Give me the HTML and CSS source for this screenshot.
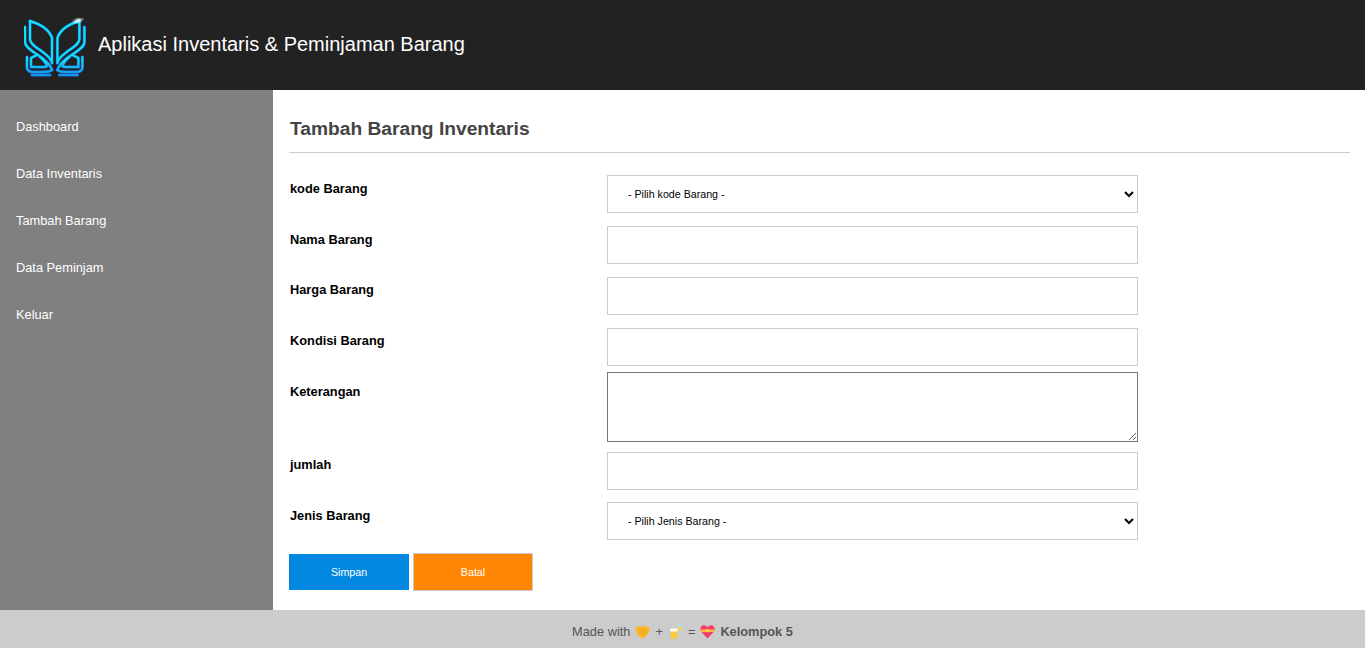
FILE: index.html
```html
<!DOCTYPE html>
<html lang="id">
<head>
<meta charset="utf-8">
<title>Aplikasi Inventaris &amp; Peminjaman Barang</title>
<link rel="stylesheet" href="styles.css">
</head>
<body>
<header class="topbar">
  <svg class="logo" viewBox="0 0 62 62" width="62" height="62" aria-hidden="true">
    <defs>
      <linearGradient id="lg" gradientUnits="userSpaceOnUse" x1="0" y1="0" x2="0" y2="60">
        <stop offset="0" stop-color="#0fe8f6"/>
        <stop offset="0.7" stop-color="#10dcf2"/>
        <stop offset="1" stop-color="#1a86ea"/>
      </linearGradient>
      <radialGradient id="glow">
        <stop offset="0" stop-color="#fff"/>
        <stop offset="1" stop-color="#fff" stop-opacity="0"/>
      </radialGradient>
      <g id="wing" fill="none" stroke-linejoin="round" stroke-linecap="round">
        <path d="M6 3 C16 6 25 11 28 20 L28 45"/>
        <path d="M6 3 L6 21 C6 27 14 30 20 35 C24 38 27 41 28 45"/>
        <path d="M1 9 L1 24 C1 29 8 33 14 37 C20 41 26 46 28 52"/>
        <path d="M3 39 L3 50 C3 52 6 54 8 54 L18 54 C22 54 26 54 28 52"/>
        <path d="M13 37 L7 40 L7 49 L19 49 C21 49 23 49 23 48 C22 45 20 42 16 39"/>
        <path d="M8 57 L26 57"/>
      </g>
    </defs>
    <g stroke="#1a70e0" stroke-width="3">
      <use href="#wing"/>
      <use href="#wing" transform="matrix(-1 0 0 1 61.4 0)"/>
    </g>
    <g stroke="url(#lg)" stroke-width="2">
      <use href="#wing"/>
      <use href="#wing" transform="matrix(-1 0 0 1 61.4 0)"/>
    </g>
    <ellipse cx="54" cy="2.5" rx="7" ry="3.5" fill="url(#glow)" transform="rotate(-20 54 2.5)"/>
  </svg>
  <h1 class="app-title">Aplikasi Inventaris &amp; Peminjaman Barang</h1>
</header>
<div class="main">
  <nav class="sidebar">
    <a href="#">Dashboard</a>
    <a href="#">Data Inventaris</a>
    <a href="#">Tambah Barang</a>
    <a href="#">Data Peminjam</a>
    <a href="#">Keluar</a>
  </nav>
  <section class="content">
    <h2 class="page-title">Tambah Barang Inventaris</h2>
    <form class="form">
      <div class="row row-a"><label>kode Barang</label>
        <select class="field"><option>- Pilih kode Barang -</option></select></div>
      <div class="row row-b"><label>Nama Barang</label><input class="field" type="text"></div>
      <div class="row row-c"><label>Harga Barang</label><input class="field" type="text"></div>
      <div class="row row-c"><label>Kondisi Barang</label><input class="field" type="text"></div>
      <div class="row row-d"><label>Keterangan</label><textarea class="area"></textarea></div>
      <div class="row row-e"><label>jumlah</label><input class="field" type="text"></div>
      <div class="row row-f"><label>Jenis Barang</label>
        <select class="field"><option>- Pilih Jenis Barang -</option></select></div>
      <div class="actions">
        <button class="btn btn-save" type="button">Simpan</button>
        <button class="btn btn-cancel" type="button">Batal</button>
      </div>
    </form>
  </section>
</div>
<footer class="footer">
  <span>Made with</span>
  <svg class="emoji" viewBox="0 0 15 15" aria-hidden="true">
    <path d="M0.5 3 C3 2 5 2 7.5 2.6 C10 2 12 2 14.5 3 C15 7 13.5 11 8 14.2 C7.5 14.5 7 14.5 6.5 14.2 C1.5 11 0 7 0.5 3 Z" fill="#fbb92e"/>
    <path d="M4 4.5 L11 10.5 M2.8 6.8 L9 12 M7 3.8 L12.5 8.5" stroke="#e8961a" stroke-width="1" fill="none"/>
  </svg>
  <span>+</span>
  <svg class="emoji" viewBox="0 0 15 15" aria-hidden="true">
    <rect x="8.6" y="0.4" width="5.6" height="8" rx="1.2" transform="rotate(28 11.4 4.4)" fill="#b5daf4"/>
    <rect x="9.6" y="2.4" width="3.6" height="5" transform="rotate(28 11.4 5)" fill="#f8cf55"/>
    <path d="M2.5 8.5 H0.8 V12.5 H2.5" fill="none" stroke="#a9d3ef" stroke-width="1.2"/>
    <rect x="2.4" y="5.6" width="7" height="9" rx="1" fill="#f9c93f"/>
    <rect x="2" y="4.4" width="7.8" height="3.2" rx="1.5" fill="#fffdf0"/>
  </svg>
  <span>=</span>
  <svg class="emoji" viewBox="0 0 15 15" aria-hidden="true">
    <path d="M7.5 14.4 L1.2 7.8 C-0.6 4.8 0.8 1.2 4 1.2 C5.5 1.2 6.7 2 7.5 3.2 C8.3 2 9.5 1.2 11 1.2 C14.2 1.2 15.6 4.8 13.8 7.8 Z" fill="#f23f68"/>
    <path d="M0.4 5.5 H14.6 L14 8 H1 Z" fill="#f9b93a"/>
    <path d="M5.8 4.6 L7.5 5.8 L9.2 4.6 V8.8 L7.5 7.6 L5.8 8.8 Z" fill="#fbd15f"/>
  </svg>
  <strong>Kelompok 5</strong>
</footer>
</body>
</html>
```
FILE: styles.css
```css
* { box-sizing: border-box; }
html, body { height: 100%; }
body {
  margin: 0;
  display: flex;
  flex-direction: column;
  height: 648px;
  overflow: hidden;
  font-family: "Liberation Sans", Arial, sans-serif;
  background: #fff;
  color: #000;
}
.topbar {
  height: 90px;
  flex: none;
  background: #222;
  display: flex;
  align-items: center;
  padding-left: 24px;
}
.logo { flex: none; margin-right: 12px; margin-top: 8px; }
.app-title {
  margin: -2px 0 0;
  font-size: 20px;
  font-weight: 400;
  color: #fff;
}
.main { flex: 1; display: flex; min-height: 0; }
.sidebar {
  width: 273px;
  flex: none;
  background: #808080;
  padding-top: 13px;
  display: flex;
  flex-direction: column;
}
.sidebar a {
  display: block;
  height: 47px;
  line-height: 47px;
  padding-left: 16px;
  font-size: 12.8px;
  color: #fff;
  text-decoration: none;
}
.content { flex: 1; padding: 0 15px 0 16px; min-width: 0; }
.page-title {
  margin: 0 0 22px;
  height: 63px;
  padding: 27px 0 0 1px;
  font-size: 19.2px;
  line-height: 23px;
  font-weight: 700;
  color: #444;
  border-bottom: 1px solid #ccc;
}
.row { display: flex; align-items: flex-start; }
.row label {
  width: 318px;
  flex: none;
  padding-left: 1px;
  font-size: 12.8px;
  line-height: 16px;
  font-weight: 700;
}
.row-a label, .row-b label, .row-f label { padding-top: 6px; }
.row-c label, .row-e label { padding-top: 5px; }
.row-d label { padding-top: 12px; }
.row-b { margin-top: 13px; }
.row-c { margin-top: 13px; }
.row-d { margin-top: 6px; }
.row-e { margin-top: 10px; }
.row-f { margin-top: 12px; }
.field {
  width: 531px;
  height: 38px;
  padding: 0 16px;
  background: #fff;
  border: 1px solid #ccc;
  border-radius: 0;
  font-family: inherit;
  font-size: 10.67px;
  color: #000;
}
.area {
  display: block;
  width: 531px;
  height: 70px;
  border: 1px solid #767676;
  border-radius: 0;
  margin: 0;
  padding: 2px;
}
.actions { display: flex; align-items: center; gap: 4px; margin-top: 13px; }
.btn {
  width: 120px;
  font-family: inherit;
  font-size: 10.67px;
  color: #fff;
  padding: 0;
  border-radius: 0;
}
.btn-save { height: 36px; background: #0288e0; border: 0; }
.btn-cancel { height: 38px; background: #ff8505; border: 1px solid #ccc; }
.footer {
  height: 38px;
  flex: none;
  padding-top: 4px;
  background: #ccc;
  display: flex;
  align-items: center;
  justify-content: center;
  gap: 5px;
  font-size: 12.8px;
  color: #555;
}
.emoji { width: 15px; height: 15px; flex: none; }
```
